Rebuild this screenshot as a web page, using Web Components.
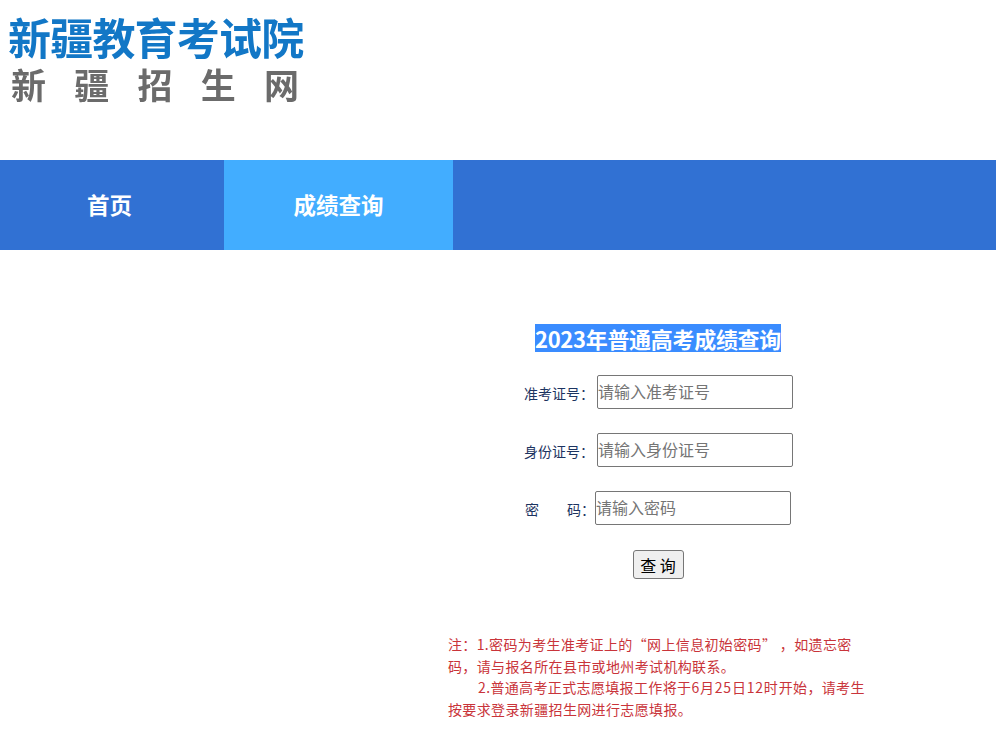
<!DOCTYPE html>
<html lang="zh-CN">
<head>
<meta charset="utf-8">
<title>新疆招生网</title>
<style>
    html, body { margin: 0; padding: 0; background: #fff; }
    body { font-family: "Noto Sans CJK SC", "Liberation Sans", sans-serif; }
</style>
</head>
<body>
<site-header></site-header>
<site-nav>
    <nav-tab width="224" style="padding-right: 5px;">首页</nav-tab>
    <nav-tab width="229" active>成绩查询</nav-tab>
</site-nav>
<query-page>
    <query-form title="2023年普通高考成绩查询">
        <form-row label="准考证号：" placeholder="请输入准考证号"></form-row>
        <form-row label="身份证号：" placeholder="请输入身份证号"></form-row>
        <form-row label="密&nbsp;&nbsp;&nbsp;&nbsp;&nbsp;&nbsp;&nbsp;&nbsp;&nbsp;码：" placeholder="请输入密码" type="password" style="gap: 0; margin-left: -1px;"></form-row>
    </query-form>
    <query-notice></query-notice>
</query-page>

<script>
class SiteHeader extends HTMLElement {
    constructor() {
        super();
        this.attachShadow({ mode: 'open' });
        this.shadowRoot.innerHTML = `
        <style>
            :host { display: block; height: 160px; overflow: hidden; }
            .logo {
                display: flex;
                flex-direction: column;
                gap: 1px;
                padding: 15px 0 0 8px;
                filter: blur(0.3px);
                font-family: "Liberation Sans", "Noto Sans CJK SC", sans-serif;
            }
            .org {
                font-size: 43px;
                line-height: 50px;
                font-weight: 700;
                letter-spacing: -0.8px;
                color: #1277c6;
                white-space: nowrap;
            }
            .site {
                display: flex;
                width: 288px;
                justify-content: space-between;
                margin-left: 3px;
                font-size: 35px;
                line-height: 42px;
                font-weight: 700;
                color: #6b6b6b;
            }
        </style>
        <div class="logo">
            <div class="org">新疆教育考试院</div>
            <div class="site"><span>新</span><span>疆</span><span>招</span><span>生</span><span>网</span></div>
        </div>`;
    }
}

class SiteNav extends HTMLElement {
    constructor() {
        super();
        this.attachShadow({ mode: 'open' });
        this.shadowRoot.innerHTML = `
        <style>
            :host { display: flex; height: 90px; background: #3171d3; }
        </style>
        <slot></slot>`;
    }
}

class NavTab extends HTMLElement {
    constructor() {
        super();
        this.attachShadow({ mode: 'open' });
        this.shadowRoot.innerHTML = `
        <style>
            :host {
                display: flex;
                align-items: center;
                justify-content: center;
                padding-bottom: 2px;
                box-sizing: border-box;
                font-size: 22.5px;
                font-weight: 700;
                color: #fff;
                cursor: pointer;
            }
            :host([active]) { background: #42adff; }
        </style>
        <slot></slot>`;
    }

    connectedCallback() {
        this.style.width = this.getAttribute('width') + 'px';
    }
}

class QueryPage extends HTMLElement {
    constructor() {
        super();
        this.attachShadow({ mode: 'open' });
        this.shadowRoot.innerHTML = `
        <style>
            :host { display: block; width: 420px; padding: 76px 0 0 448px; }
        </style>
        <slot></slot>`;
    }
}

class QueryForm extends HTMLElement {
    constructor() {
        super();
        this.attachShadow({ mode: 'open' });
    }

    connectedCallback() {
        this.shadowRoot.innerHTML = `
        <style>
            :host { display: flex; flex-direction: column; align-items: center; }
            h2 {
                margin: -2px 0 23px;
                font-size: 22px;
                line-height: 28px;
                letter-spacing: -0.3px;
                font-weight: 700;
                color: #fff;
                background: #3a8cff;
            }
            .rows { display: flex; flex-direction: column; gap: 24px; align-items: center; margin-left: 1px; }
            button {
                margin-top: 25px;
                width: 51px;
                height: 29px;
                padding: 0;
                font: 16px "Noto Sans CJK SC", "Liberation Sans", sans-serif;
                line-height: 1;
                color: #000;
                background: #efefef;
                border: 1px solid #767676;
                border-radius: 3px;
            }
        </style>
        <h2>${this.getAttribute('title')}</h2>
        <div class="rows"><slot></slot></div>
        <button type="button">查 询</button>`;
    }
}

class FormRow extends HTMLElement {
    constructor() {
        super();
        this.attachShadow({ mode: 'open' });
    }

    connectedCallback() {
        const type = this.getAttribute('type') || 'text';
        this.shadowRoot.innerHTML = `
        <style>
            :host { display: flex; align-items: center; gap: 3px; height: 34px; }
            label { font-size: 14px; line-height: 20px; color: #1c3461; white-space: pre; position: relative; top: 1px; }
            input {
                box-sizing: border-box;
                width: 196px;
                height: 34px;
                margin: 0;
                padding: 0 0 2px;
                font: 16px "Noto Sans CJK SC", "Liberation Sans", sans-serif;
                border: 1px solid #767676;
                border-radius: 2px;
                outline: none;
            }
            input::placeholder { color: #757575; }
        </style>
        <label>${this.getAttribute('label')}</label>
        <input type="${type}" placeholder="${this.getAttribute('placeholder')}">`;
    }
}

class QueryNotice extends HTMLElement {
    constructor() {
        super();
        this.attachShadow({ mode: 'open' });
        this.shadowRoot.innerHTML = `
        <style>
            :host { display: block; margin-top: 55px; font-size: 14px; line-height: 21.6px; letter-spacing: 0.36px; color: #c9343a; }
            p { margin: 0; }
            .second { text-indent: 30px; }
            .date { letter-spacing: 0.8px; }
        </style>
        <p>注：1.密码为考生准考证上的“网上信息初始密码” ，如遗忘密<br>码，请与报名所在县市或地州考试机构联系。</p>
        <p class="second">2.普通高考正式志愿填报工作将于<span class="date">6月25日12时</span>开始，请考生<br>按要求登录新疆招生网进行志愿填报。</p>`;
    }
}

customElements.define('site-header', SiteHeader);
customElements.define('site-nav', SiteNav);
customElements.define('nav-tab', NavTab);
customElements.define('query-page', QueryPage);
customElements.define('query-form', QueryForm);
customElements.define('form-row', FormRow);
customElements.define('query-notice', QueryNotice);
</script>
</body>
</html>
